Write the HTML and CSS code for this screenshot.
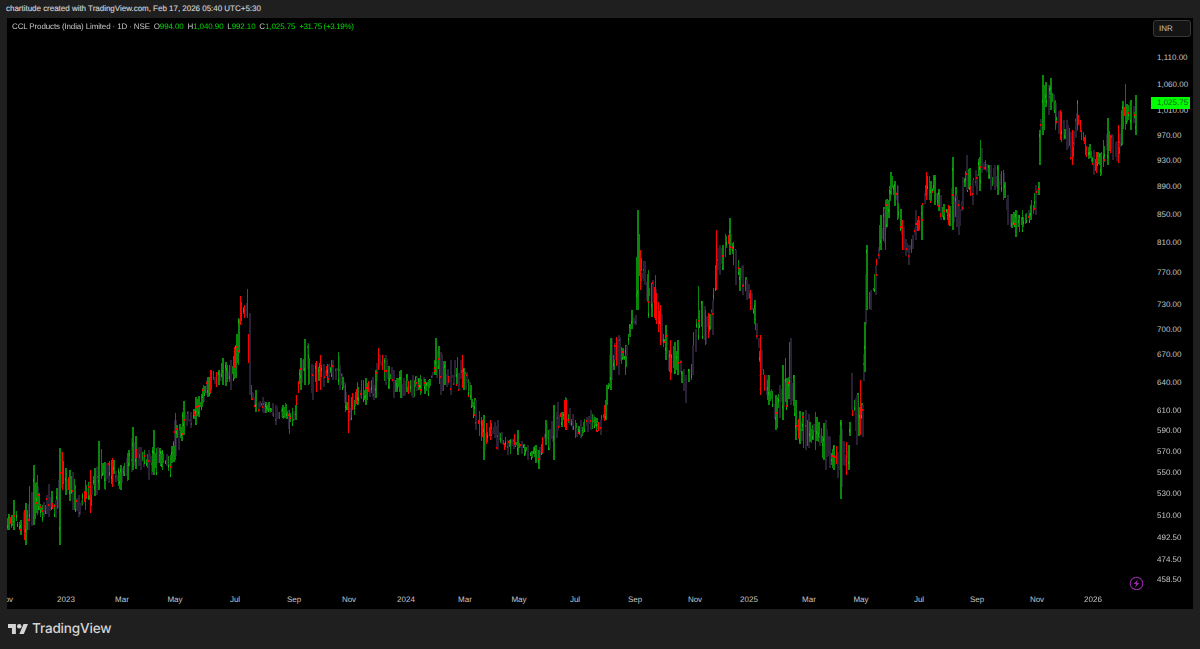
FILE: index.html
```html
<!DOCTYPE html>
<html lang="en">
<head>
<meta charset="utf-8">
<title>CCL Products (India) Limited chart</title>
<link rel="stylesheet" href="styles.css">
</head>
<body>
<header class="caption">chartitude created with TradingView.com, Feb 17, 2026 05:40 UTC+5:30</header>
<main class="frame">
  <section class="pane">
    <canvas id="bars" width="1141" height="572"></canvas>
    <div class="legend">
      <span class="symbol">CCL Products (India) Limited · 1D · NSE</span>
      <span class="ohlc">O<b>994.00</b></span>
      <span class="ohlc">H<b>1,040.90</b></span>
      <span class="ohlc">L<b>992.10</b></span>
      <span class="ohlc">C<b>1,025.75</b></span>
      <b class="change">+31.75 (+3.19%)</b>
    </div>
    <svg class="bolt" viewBox="0 0 16 16" aria-hidden="true">
      <circle cx="8" cy="8" r="6.7"></circle>
      <path class="bolt-mark" d="M9.6 3.8 4.9 8.6h2.7L6.4 12.2l4.7-4.8H8.4z"></path>
    </svg>
  </section>
  <aside class="price-axis" id="prices">
    <div class="currency">INR</div>
    <div class="last-price">1,025.75</div>
  </aside>
  <div class="time-axis" id="times"></div>
</main>
<footer class="brand">
  <svg class="brand-mark" viewBox="0 4 35.5 18" aria-hidden="true">
    <path d="M14 22H7V11H0V4h14v18zM28 22h-8l7.5-18h8L28 22z"></path>
    <circle cx="20" cy="8" r="4"></circle>
  </svg>
  <span class="brand-name">TradingView</span>
</footer>
<script src="chart.js"></script>
</body>
</html>
```

FILE: styles.css
```css
* { box-sizing: border-box; }
html, body { margin: 0; height: 100%; }
body {
  width: 1200px;
  height: 649px;
  overflow: hidden;
  background: #1f1f1f;
  color: #c6c6c6;
  font-family: "Liberation Sans", Arial, sans-serif;
  font-size: 8px;
  text-rendering: geometricPrecision;
  display: flex;
  flex-direction: column;
}
.caption {
  height: 18px;
  padding: 0 0 0 6px;
  line-height: 18px;
  font-size: 8px;
  letter-spacing: -0.02px;
  color: #d0d0d0;
  -webkit-text-stroke: 0.15px #d0d0d0;
  white-space: nowrap;
}
.frame {
  margin: 0 7px;
  height: 591px;
  background: #000;
  display: grid;
  grid-template-columns: 1141px 45px;
  grid-template-rows: 572px 19px;
}
.pane { position: relative; overflow: hidden; }
#bars { display: block; }
.legend {
  position: absolute;
  left: 5px;
  top: 3px;
  display: flex;
  gap: 3.8px;
  line-height: 12px;
  white-space: nowrap;
}
.symbol { letter-spacing: -0.14px; }
.ohlc { letter-spacing: -0.1px; }
.ohlc b, .change { font-weight: 400; color: #00dc00; }
.change { letter-spacing: -0.35px; }
.bolt {
  position: absolute;
  left: 1122px;
  top: 558px;
  width: 15px;
  height: 15px;
  fill: none;
  stroke: #9c27b0;
  stroke-width: 1.1;
}
.bolt-mark { fill: #9c27b0; stroke: none; }
.price-axis { position: relative; overflow: hidden; }
.currency {
  position: absolute;
  left: 5px;
  top: 2px;
  width: 38px;
  height: 17px;
  padding-left: 5px;
  border: 1px solid #383838;
  border-radius: 3px;
  background: #141414;
  line-height: 16px;
}
.price, .month { position: absolute; line-height: 12px; white-space: nowrap; }
.price { left: 9px; margin-top: 1px; transform: translateY(-50%); }
.last-price {
  position: absolute;
  left: 3px;
  top: 79px;
  width: 39px;
  height: 12px;
  padding-left: 6px;
  background: #00ff00;
  color: #1c5a1c;
  line-height: 12px;
  z-index: 1;
}
.time-axis { grid-column: 1 / -1; position: relative; overflow: hidden; }
.month { top: 4px; transform: translateX(-50%); }
.brand {
  flex: 1;
  display: flex;
  align-items: center;
  gap: 4px;
  padding: 0 0 0 8px;
}
.brand-mark { width: 20px; height: 10.2px; fill: #d4d4d4; }
.brand-name {
  font-family: Inter, "Liberation Sans", sans-serif;
  font-size: 13.6px;
  font-weight: 500;
  letter-spacing: -0.2px;
  color: #d4d4d4;
}
```

FILE: chart.js
```js
(function () {
  var prices = [["1,110.00",57],["1,060.00",84],["1,010.00",110],["970.00",135],["930.00",160],["890.00",186],["850.00",214],["810.00",242],["770.00",272],["730.00",304],["700.00",329],["670.00",354],["640.00",382],["610.00",410],["590.00",430],["570.00",451],["550.00",472],["530.00",493],["510.00",515],["492.50",537],["474.50",559],["458.50",579]];
  var months = [["Nov",6],["2023",66],["Mar",122],["May",175],["Jul",235],["Sep",294],["Nov",349],["2024",406],["Mar",465],["May",519],["Jul",575],["Sep",635],["Nov",695],["2025",749],["Mar",809],["May",861],["Jul",919],["Sep",977],["Nov",1037],["2026",1093]];
  var FRAME_X = 7, FRAME_Y = 18;

  var priceAxis = document.getElementById("prices");
  prices.forEach(function (p) {
    var el = document.createElement("div");
    el.className = "price";
    el.textContent = p[0];
    el.style.top = (p[1] - FRAME_Y) + "px";
    priceAxis.appendChild(el);
  });
  var timeAxis = document.getElementById("times");
  months.forEach(function (m) {
    var el = document.createElement("div");
    el.className = "month";
    el.textContent = m[0];
    el.style.left = (m[1] - FRAME_X) + "px";
    timeAxis.appendChild(el);
  });

  // x, high y, low y, optional colour of the bar drawn at the anchor
  var A = [
    [7,518,530],[13,500,530,"g"],[20,520,535],[25,503,545,"g"],[33,465,525,"g"],[37,475,515,"r"],[42,505,522],[48,484,517,"p"],[55,500,518],[59,448,545,"g"],
    [62,452,490,"r"],[65,468,495],[72,472,510],[78,495,517],[85,480,510],[90,470,513,"r"],[98,441,490,"g"],[105,462,490],[112,458,487],[120,465,490],
    [128,450,480],[132,427,470,"g"],[140,447,470],[148,450,480],[153,430,475,"g"],[162,450,470],[170,455,474],[175,413,460,"r"],[178,430,450],[183,401,435,"g"],
    [190,412,428],[195,397,425],[203,385,403],[210,370,393],[222,358,385,"g"],[230,360,390,"p"],[235,345,378,"g"],[238,318,365,"g"],[240,296,325,"r"],[247,289,318,"r"],[249,313,395,"p"],
    [251,385,400],[255,390,412,"g"],[262,397,412],[275,405,425],[285,403,418],[289,410,434,"r"],[295,405,420],[300,358,390,"g"],
    [304,339,385,"g"],[308,344,385,"g"],[312,365,400,"p"],[320,355,390],[332,360,380],[338,352,385,"g"],[345,385,412],[348,395,433,"r"],[357,382,405],[365,378,405],
    [375,370,398],[378,348,370,"r"],[385,355,385],[393,370,398],[400,370,398],[412,375,398],[420,375,395],[428,380,393],[434,360,375],[435,338,375,"g"],
    [440,352,395,"p"],[450,360,395],[462,355,388,"r"],[470,385,400],[475,400,430],[483,415,460,"g"],[490,420,440],[497,420,450,"p"],[507,440,455],[517,430,455,"g"],
    [527,445,460],[535,445,463],[538,450,469,"g"],[545,420,445],[553,405,460,"g"],[557,402,430],[565,397,430,"r"],[575,420,437],[580,420,438],[590,410,430],
    [600,420,435],[605,400,420],[610,338,390,"g"],[618,335,375,"p"],[625,345,375],[631,310,327],[635,315,325],[637,210,310,"g"],[640,250,290,"r"],[648,270,318],
    [655,275,320,"r"],[660,305,345],[665,325,360],[670,340,380],[677,340,375,"g"],[685,375,403],[692,345,375,"p"],[698,286,340,"g"],[705,310,345],[712,300,335],
    [716,230,290,"r"],[722,245,270],[729,218,255,"g"],[735,250,285],[742,265,295],[750,290,310],[755,300,330],[760,335,395,"r"],[768,375,405],[775,395,430],
    [782,365,420,"g"],[790,338,405,"p"],[795,400,440],[805,410,450],[815,412,450],[825,420,470],[833,445,470],[840,420,499,"g"],[848,445,470],[851,373,410,"p"],
    [856,395,445],[860,380,435,"r"],[862,405,437],[864,322,372,"g"],[866,245,310,"g"],[870,290,310],[875,265,295],[880,215,250,"g"],[885,200,250,"r"],[890,172,195,"g"],
    [897,185,220],[902,220,250],[908,245,265],[915,210,240],[921,205,240,"g"],[926,172,200,"r"],[934,175,205],[940,195,220],[948,205,225,"r"],[952,157,230,"g"],
    [958,200,235],[966,155,190,"p"],[972,180,205],[980,140,190,"g"],[985,160,170,"r"],[990,165,190],[997,165,195],[1003,170,200],[1007,195,225,"p"],[1015,210,237],
    [1022,210,230],[1030,205,220],[1035,185,215],[1038,182,195,"g"],[1039,130,165,"g"],[1042,75,135,"g"],[1050,78,110],[1055,100,130,"r"],[1060,110,140],[1066,120,150],
    [1072,130,165,"r"],[1077,100,130,"g"],[1085,135,155],[1093,150,175],[1100,153,175],[1107,118,165,"g"],[1112,135,160],[1118,125,163],[1125,84,130,"r"],[1130,100,130],[1135,95,135,"g"]
  ];

  var seed = 12345;
  function rnd() { seed = (seed * 16807) % 2147483647; return (seed - 1) / 2147483646; }

  var ctx = document.getElementById("bars").getContext("2d");
  var GREEN = "#0a860a", BRIGHT = "#10b410", RED = "#ff0000", PURPLE = "#2a2036";

  function rect(color, x, y, w, h) {
    ctx.fillStyle = color;
    ctx.fillRect(Math.round(x) - FRAME_X, Math.round(y) - FRAME_Y, w, Math.max(1, Math.round(h)));
  }
  function bar(kind, x, hi, lo) {
    if (kind === "g") {
      rect(GREEN, x, hi, rnd() < 0.3 ? 1 : 2, lo - hi);
      rect(BRIGHT, x, hi + (lo - hi) * rnd(), 1, 3);
    } else if (kind === "p") {
      rect(PURPLE, x, hi, 2, lo - hi);
    } else {
      rect(RED, x, hi, 1, lo - hi);
    }
  }
  function pick() {
    var r = rnd();
    return r < 0.42 ? "g" : r < 0.8 ? "p" : "r";
  }

  var queue = [];
  for (var i = 0; i < A.length - 1; i++) {
    var a = A[i], b = A[i + 1];
    for (var x = a[0]; x < b[0]; x += 1.4) {
      var t = (x - a[0]) / (b[0] - a[0]);
      var hi = a[1] + (b[1] - a[1]) * t, lo = a[2] + (b[2] - a[2]) * t;
      var span = lo - hi;
      var h0 = hi + span * rnd() * 0.5, h1 = lo - span * rnd() * 0.5;
      queue.push([pick(), x, h0, Math.max(h0 + 3, h1)]);
    }
  }
  queue.forEach(function (q) { bar(q[0], q[1], q[2], q[3]); });
  A.forEach(function (a) { bar(a[3] || pick(), a[0], a[1], a[2]); });
  // small red close marks sprinkled on the bars
  queue.forEach(function (q) {
    if (rnd() < 0.35) rect(RED, q[1], q[2] + (q[3] - q[2]) * rnd(), 1, 2);
  });
})();
```
